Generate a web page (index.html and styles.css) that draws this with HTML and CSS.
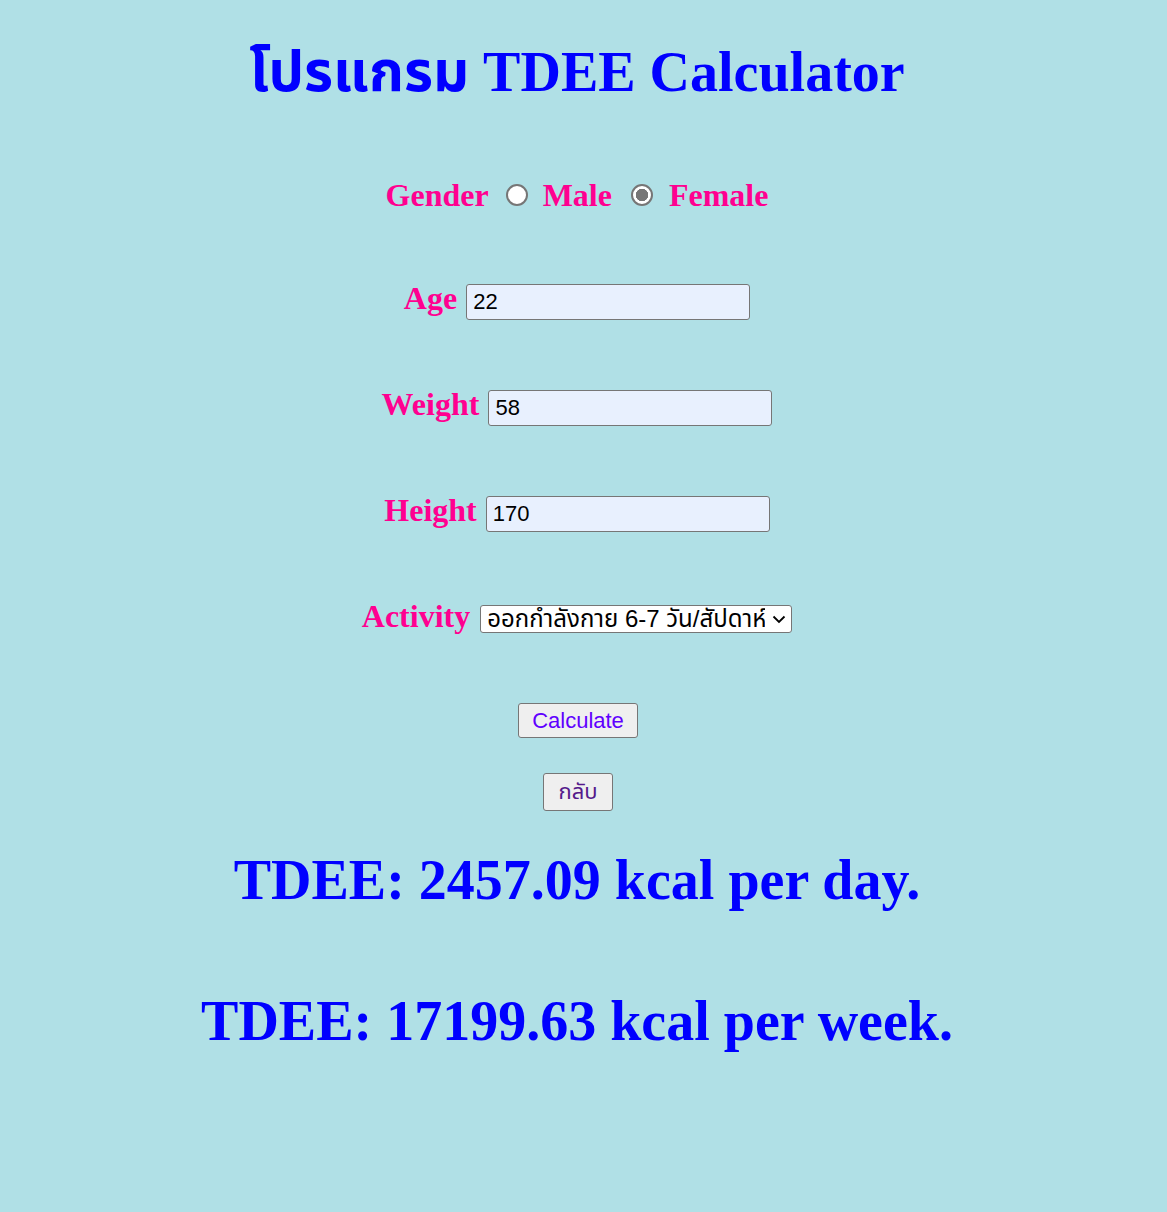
FILE: index.html
```html
<!DOCTYPE html>
<html lang="th">
<head>
<meta charset="utf-8">
<title>TDEE Calculator</title>
<link rel="stylesheet" href="styles.css">
</head>
<body>
<main class="page">
  <h1 class="title">โปรแกรม TDEE Calculator</h1>
  <form class="form">
    <div class="row row-gender">
      <span class="label">Gender</span>
      <input class="radio" type="radio" name="gender" id="male">
      <label class="label" for="male">Male</label>
      <input class="radio radio-female" type="radio" name="gender" id="female" checked>
      <label class="label" for="female">Female</label>
    </div>
    <div class="row">
      <label class="label" for="age">Age</label>
      <input class="field" id="age" type="text" value="22">
    </div>
    <div class="row">
      <label class="label" for="weight">Weight</label>
      <input class="field" id="weight" type="text" value="58">
    </div>
    <div class="row">
      <label class="label" for="height">Height</label>
      <input class="field" id="height" type="text" value="170">
    </div>
    <div class="row">
      <label class="label" for="activity">Activity</label>
      <span class="select-wrap">
        <select class="select" id="activity">
          <option>ออกกำลังกาย 6-7 วัน/สัปดาห์</option>
        </select>
        <svg class="chevron" width="14" height="9" viewBox="0 0 14 9" aria-hidden="true">
          <path d="M1.5 1.5 L7 7 L12.5 1.5" fill="none" stroke="#000" stroke-width="1.8"/>
        </svg>
      </span>
    </div>
    <div class="buttons">
      <button type="button" class="btn btn-calc">Calculate</button>
      <button type="button" class="btn btn-back">กลับ</button>
    </div>
  </form>
  <h1 class="result result-day">TDEE: 2457.09 kcal per day.</h1>
  <h1 class="result result-week">TDEE: 17199.63 kcal per week.</h1>
</main>
</body>
</html>
```

FILE: styles.css
```css
html, body {
  background: #b0e0e6;
}
body {
  margin: 8px 21px 8px 8px;
  font-family: "Liberation Serif", "Noto Sans Thai", "Noto Sans", serif;
}
.page {
  display: flex;
  flex-direction: column;
  align-items: center;
}
.title {
  margin: 32px 0 0;
  font-size: 56px;
  line-height: 1.15;
  font-weight: bold;
  color: #0000ff;
}
.form {
  display: flex;
  flex-direction: column;
  align-items: center;
  margin-top: 73px;
}
.row {
  display: flex;
  align-items: baseline;
  justify-content: center;
  margin-bottom: 66px;
}
.label {
  font-size: 32px;
  font-weight: bold;
  color: #ff0090;
  line-height: 37px;
}
.radio {
  appearance: none;
  -webkit-appearance: none;
  width: 22px;
  height: 22px;
  margin: 0 15px 0 17px;
  border: 2px solid #767676;
  border-radius: 50%;
  background: #fff;
  align-self: center;
  box-sizing: border-box;
  position: relative;
  top: -1px;
}
.radio-female {
  margin-left: 19px;
  margin-right: 16px;
}
.radio:checked {
  background: radial-gradient(circle, #767676 0 6px, #fff 6.5px);
}
.field {
  margin-left: 9px;
  width: 284px;
  height: 36px;
  box-sizing: border-box;
  padding: 0 6px;
  font-family: "Liberation Sans", Arial, sans-serif;
  font-size: 22px;
  color: #000;
  background: #e8f0fe;
  border: 1px solid #767676;
  border-radius: 3px;
}
.select-wrap {
  position: relative;
  margin-left: 10px;
  display: inline-flex;
}
.select {
  appearance: none;
  -webkit-appearance: none;
  width: 312px;
  height: 28px;
  box-sizing: border-box;
  padding: 0 26px 0 6px;
  font-family: "Liberation Sans", "Noto Sans Thai", sans-serif;
  font-size: 24px;
  line-height: 26px;
  color: #000;
  background: #fff;
  border: 1px solid #767676;
  border-radius: 3px;
}
.chevron {
  position: absolute;
  right: 6px;
  top: 10px;
  pointer-events: none;
}
.buttons {
  display: flex;
  flex-direction: column;
  align-items: center;
  gap: 35px;
  margin-top: 2px;
}
.btn {
  font-family: "Liberation Sans", "Noto Sans Thai", sans-serif;
  font-size: 22px;
  background: #efefef;
  border: 1px solid #767676;
  border-radius: 3px;
  padding: 2px 13px;
  height: 35px;
}
.btn-calc {
  color: #6000ff;
  margin-left: 2px;
}
.btn-back {
  color: #551a8b;
  height: 38px;
  padding: 2px 14px;
  margin-left: 2px;
}
.result {
  margin: 0;
  font-size: 56px;
  font-weight: bold;
  color: #0000ff;
  line-height: 1.15;
}
.result-day {
  margin-top: 37px;
}
.result-week {
  margin-top: 76px;
}
```
